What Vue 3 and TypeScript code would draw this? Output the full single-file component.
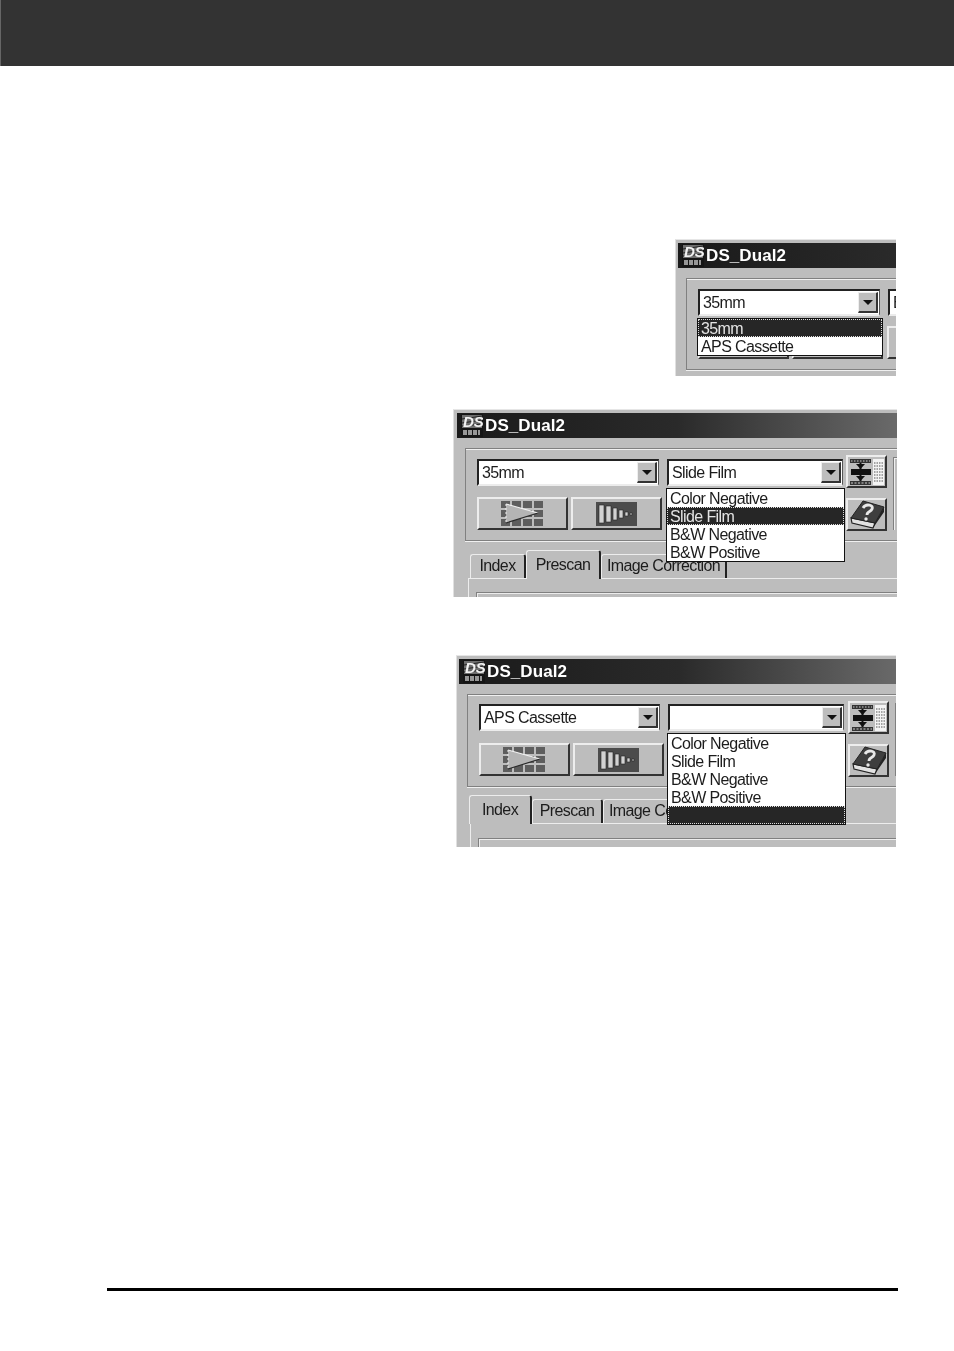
<script setup lang="ts">
interface Win {
  id: string
  combo1: string
  combo2: string
  menuOn: 0 | 1
  items: string[]
  selected: number
  activeTab: number
  showTabs: boolean
}
const tabs = ['Index', 'Prescan', 'Image Correction']
const film = ['Color Negative', 'Slide Film', 'B&W Negative', 'B&W Positive']
const windows: Win[] = [
  { id: 'a', combo1: '35mm', combo2: 'B&W Negative', menuOn: 0, items: ['35mm', 'APS Cassette'], selected: 0, activeTab: 1, showTabs: false },
  { id: 'b', combo1: '35mm', combo2: 'Slide Film', menuOn: 1, items: film, selected: 1, activeTab: 1, showTabs: true },
  { id: 'c', combo1: 'APS Cassette', combo2: '', menuOn: 1, items: [...film, ''], selected: 4, activeTab: 0, showTabs: true },
]
const cells: [number, number][] = []
for (const y of [0, 9, 18]) for (const x of [0, 11, 22, 33]) cells.push([x, y])
const bars = [
  [3, 3, 5, 18],
  [10, 4, 5, 16],
  [17, 6, 4, 12],
  [23, 8, 4, 8],
  [29, 10, 3, 4],
  [34, 11, 2, 2],
]
const rows = [5, 8, 11, 14, 17, 20, 23]
</script>

<template>
  <div class="page">
    <header class="band"></header>
    <main class="shots">
      <section v-for="w in windows" :key="w.id" class="win" :class="'win-' + w.id">
        <div class="inner">
          <div class="title">
            <svg class="logo" viewBox="0 0 22 23">
              <rect width="22" height="23" fill="#151515" />
              <rect x="1" y="1" width="20" height="13" fill="#6e6e6e" />
              <path d="M1 5 L21 2 M1 9 L21 6 M1 12 L21 10" stroke="#222" stroke-width="1" />
              <text x="2" y="13" class="logo-ds">DS</text>
              <path d="M3 16v5M5 16v5M8 16v5M10 16v5M13 16v5M15 16v5M18 16v5" stroke="#eee" stroke-width="1.2" />
            </svg>
            <span class="title-text">DS_Dual2</span>
          </div>

          <div class="toolbar">
            <div class="controls">
              <div class="row-top">
                <div v-for="(val, ci) in [w.combo1, w.combo2]" :key="ci" class="combo" :class="ci === 0 ? 'combo-first' : 'combo-second'">
                  <span class="combo-value">{{ val }}</span>
                  <span class="combo-arrow"></span>
                  <ul v-if="w.menuOn === ci" class="menu">
                    <li v-for="(item, i) in w.items" :key="i" class="menu-item" :class="{ selected: i === w.selected }">{{ item }}</li>
                  </ul>
                </div>
              </div>
              <div class="row-bottom">
                <button class="btn btn-wide">
                  <svg width="43" height="25" viewBox="0 0 43 25">
                    <rect v-for="(c, i) in cells" :key="i" :x="c[0]" :y="c[1]" width="9" height="7" fill="#5e5e5e" />
                    <polygon points="5,3 37,12 5,22" fill="#b4b4b4" />
                    <path d="M5 3 L37 12" stroke="#f2f2f2" stroke-width="1.2" />
                    <path d="M5 22 L37 12" stroke="#2a2a2a" stroke-width="1.2" />
                    <path d="M5 3 V22" stroke="#eee" stroke-width="1" stroke-dasharray="2 2" />
                  </svg>
                </button>
                <button class="btn btn-wide btn-second">
                  <svg width="41" height="24" viewBox="0 0 41 24">
                    <rect width="41" height="24" fill="#4c4c4c" />
                    <rect v-for="(b, i) in bars" :key="i" :x="b[0]" :y="b[1]" :width="b[2]" :height="b[3]" fill="#d2d2d2" stroke="#222" stroke-width="0.6" />
                  </svg>
                </button>
                <button class="btn btn-hidden"></button>
              </div>
            </div>
            <div class="tools">
              <button class="btn btn-tool">
                <svg width="37" height="28" viewBox="0 0 37 28">
                  <rect x="2" y="1" width="21" height="4" fill="#333" />
                  <path d="M3 3h19" stroke="#ccc" stroke-width="1" stroke-dasharray="1.5 1.5" />
                  <rect x="3" y="11" width="20" height="6" fill="#111" />
                  <rect x="2" y="23" width="21" height="4" fill="#333" />
                  <path d="M3 25h19" stroke="#ccc" stroke-width="1" stroke-dasharray="2 1.5" />
                  <path d="M12.5 5v6M12.5 17v6" stroke="#111" stroke-width="2" />
                  <polygon points="8,6 17,6 12.5,11" fill="#111" />
                  <polygon points="8,18 17,18 12.5,23" fill="#111" />
                  <rect x="25" y="1" width="11" height="26" fill="#f4f4f4" />
                  <path v-for="y in rows" :key="y" :d="`M26 ${y}h9`" stroke="#555" stroke-width="1" stroke-dasharray="1.5 1" />
                </svg>
              </button>
              <button class="btn btn-tool">
                <svg width="36" height="29" viewBox="0 0 36 29">
                  <polygon points="2,18 3,23 24,28 26,23" fill="#e2e2e2" stroke="#222" stroke-width="1.2" />
                  <polygon points="14,1 35,7 26,23 2,18" fill="#3e3e3e" stroke="#222" stroke-width="1" />
                  <polygon points="26,23 35,7 35,12 24,28" fill="#222" />
                  <path d="M14 8 C17 3 25 5 23 9 C22 12 18 11 18 15" fill="none" stroke="#e8e8e8" stroke-width="2.8" />
                  <circle cx="17" cy="19" r="1.7" fill="#e8e8e8" />
                </svg>
              </button>
            </div>
            <div class="next-group"></div>
          </div>

          <template v-if="w.showTabs">
            <div class="tabs">
              <div v-for="(t, i) in tabs" :key="t" class="tab" :class="['tab-' + i, { active: i === w.activeTab }]">{{ t }}</div>
            </div>
            <div class="panel">
              <div class="panel-box"></div>
            </div>
          </template>
        </div>
      </section>
    </main>
    <div class="rule"></div>
  </div>
</template>

<style scoped>
.page {
  width: 954px;
  height: 1351px;
  background: #fff;
  display: flex;
  flex-direction: column;
  overflow: hidden;
}
.band {
  height: 66px;
  flex: none;
  background: #333;
  border-left: 1px solid #666;
  box-sizing: border-box;
}
.shots {
  display: flex;
  flex-direction: column;
  align-items: flex-start;
}
.win {
  position: relative;
  overflow: hidden;
  background: #bdbdbd;
  box-sizing: border-box;
  border-top: 1px solid #e6e6e6;
  border-left: 1px solid #e0e0e0;
  filter: blur(0.45px);
}
.win-a {
  margin: 173px 0 0 675px;
  width: 221px;
  height: 137px;
  --group-top: 4px;
  --combo-top: 3px;
  --inner-left: 2px;
}
.win-b {
  margin: 33px 0 0 453px;
  width: 444px;
  height: 188px;
  --group-top: 5px;
  --combo-top: 2px;
  --inner-left: 3px;
  --tabs-top: 9px;
  --tabs-left: 13px;
  --panel-top: 13px;
}
.win-c {
  margin: 58px 0 0 456px;
  width: 440px;
  height: 192px;
  --group-top: 5px;
  --combo-top: 1px;
  --inner-left: 2px;
  --tabs-top: 8px;
  --tabs-left: 10px;
  --panel-top: 14px;
}
.inner {
  width: 440px;
  padding: 3px 0 0 var(--inner-left);
  font-family: "Liberation Sans", Arial, sans-serif;
  font-size: 16px;
  letter-spacing: -0.6px;
  color: #1c1c1c;
}
.title {
  height: 25px;
  display: flex;
  align-items: center;
  background: linear-gradient(90deg, #1a1a1a 0%, #2a2a2a 50%, #6a6a6a 100%);
}
.logo {
  width: 22px;
  height: 23px;
  margin-left: 4px;
  flex: none;
}
.logo-ds {
  font-family: "Liberation Sans", sans-serif;
  font-size: 15px;
  font-style: italic;
  font-weight: 700;
  fill: #f2f2f2;
  letter-spacing: 0;
}
.title-text {
  margin-left: 2px;
  color: #fff;
  font-size: 17px;
  font-weight: 700;
  letter-spacing: 0.1px;
}
.toolbar {
  margin: 10px 0 0 8px;
  display: flex;
  align-items: flex-start;
  border-top: 1px solid #808080;
  border-bottom: 1px solid #808080;
  box-shadow: inset 0 1px 0 #f0f0f0, 0 1px 0 #f0f0f0;
  border-left: 1px solid #808080;
  padding: var(--group-top) 0 9px 11px;
}
.controls {
  width: 369px;
  flex: none;
  display: flex;
  flex-direction: column;
  gap: 10px;
  padding-top: 3px;
}
.row-top {
  display: flex;
  gap: 8px;
  height: 30px;
  box-sizing: border-box;
  padding-bottom: 3px;
}
.combo {
  position: relative;
  height: 27px;
  margin-top: var(--combo-top);
  box-sizing: border-box;
  background: #fff;
  border-top: 2px solid #222;
  border-left: 2px solid #222;
  border-right: 1px solid #555;
  border-bottom: 2px solid #ececec;
  display: flex;
  align-items: center;
}
.combo-first { width: 182px; flex: none; }
.combo-second { width: 176px; flex: none; }
.win-c .combo-first { width: 181px; }
.combo-value {
  flex: 1;
  padding: 1px 0 0 3px;
  white-space: nowrap;
  overflow: hidden;
}
.combo-arrow {
  width: 20px;
  height: 21px;
  margin-right: 1px;
  flex: none;
  box-sizing: border-box;
  background: #bdbdbd;
  border-top: 1px solid #eee;
  border-left: 1px solid #eee;
  border-right: 2px solid #333;
  border-bottom: 2px solid #333;
  position: relative;
}
.combo-arrow::after {
  content: "";
  position: absolute;
  left: 4px;
  top: 7px;
  border-left: 5px solid transparent;
  border-right: 5px solid transparent;
  border-top: 5px solid #111;
}
.menu {
  position: absolute;
  top: 100%;
  left: -3px;
  z-index: 3;
  margin: 4px 0 0;
  padding: 0;
  width: 177px;
  list-style: none;
  background: #fff;
  border: 1px solid #111;
  box-sizing: content-box;
}
.combo-first .menu { width: 184px; }
.menu-item {
  height: 18px;
  line-height: 19px;
  padding-left: 3px;
  box-sizing: border-box;
  white-space: nowrap;
}
.menu-item.selected {
  background: #262626;
  color: #e4e4e4;
  outline: 1px dotted #ddd;
  outline-offset: -1px;
}
.row-bottom {
  display: flex;
  align-items: flex-start;
}
.btn {
  box-sizing: border-box;
  padding: 0;
  background: #bdbdbd;
  border-top: 2px solid #ededed;
  border-left: 2px solid #ededed;
  border-right: 2px solid #333;
  border-bottom: 2px solid #333;
  display: flex;
  align-items: center;
  justify-content: center;
  height: 33px;
}
.btn-wide { width: 91px; flex: none; }
.btn-second { margin-left: 3px; }
.btn-hidden { width: 176px; flex: none; margin-left: 4px; }
.tools {
  display: flex;
  flex-direction: column;
  gap: 10px;
  padding-top: 1px;
  flex: none;
}
.btn-tool { width: 41px; height: 33px; }
.next-group {
  width: 40px;
  height: 72px;
  margin: 3px 0 0 6px;
  flex: none;
  border-left: 1px solid #808080;
  border-top: 1px solid #808080;
  box-shadow: inset 1px 1px 0 #efefef;
}
.tabs {
  margin: var(--tabs-top) 0 0 var(--tabs-left);
  display: flex;
  align-items: flex-end;
  height: 28px;
  position: relative;
  z-index: 1;
}
.tab {
  box-sizing: border-box;
  height: 24px;
  line-height: 22px;
  text-align: center;
  background: #bdbdbd;
  border-top: 1px solid #ededed;
  border-left: 1px solid #ededed;
  border-right: 2px solid #222;
  border-radius: 3px 3px 0 0;
  flex: none;
  white-space: nowrap;
}
.tab-0 { width: 56px; }
.tab-1 { width: 75px; }
.tab-2 { width: 126px; }
.tab.active {
  height: 29px;
  line-height: 27px;
  margin-bottom: -1px;
  padding-bottom: 3px;
}
.win-c .tab-0 { width: 63px; }
.win-c .tab-1 { width: 71px; }
.panel {
  margin-left: 11px;
  border-top: 1px solid #ededed;
  border-left: 1px solid #ededed;
  padding: var(--panel-top) 0 0 7px;
  height: 40px;
  box-sizing: border-box;
}
.panel-box {
  height: 40px;
  border-top: 1px solid #808080;
  border-left: 1px solid #808080;
  box-shadow: inset 1px 1px 0 #ececec;
}
.rule {
  margin: 441px 0 0 107px;
  width: 791px;
  height: 3px;
  flex: none;
  background: #000;
}
</style>
